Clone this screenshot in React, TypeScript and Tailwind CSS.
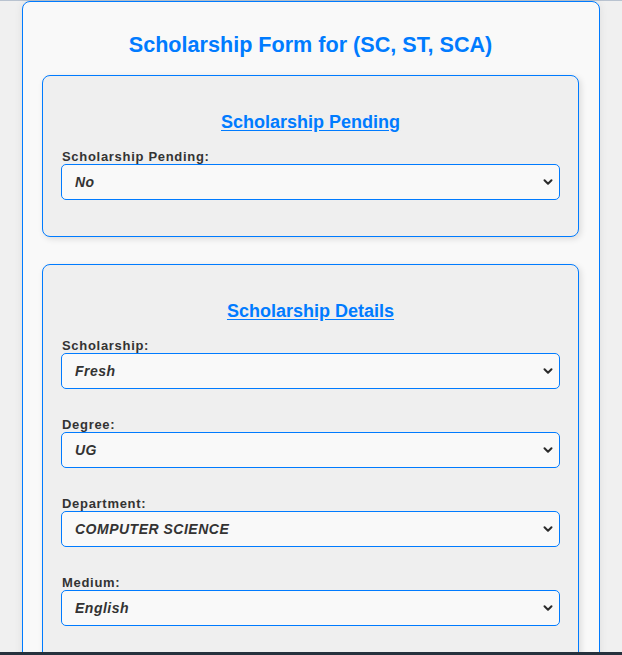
import React from "react";

type Field = { label: string; value: string; options: string[] };

const pending: Field[] = [
  { label: "Scholarship Pending:", value: "No", options: ["No", "Yes"] },
];

const details: Field[] = [
  { label: "Scholarship:", value: "Fresh", options: ["Fresh", "Renewal"] },
  { label: "Degree:", value: "UG", options: ["UG", "PG"] },
  {
    label: "Department:",
    value: "COMPUTER SCIENCE",
    options: ["COMPUTER SCIENCE", "MATHEMATICS", "PHYSICS", "COMMERCE"],
  },
  { label: "Medium:", value: "English", options: ["English", "Tamil"] },
];

function Chevron() {
  return (
    <svg
      className="pointer-events-none absolute right-[6px] top-1/2 -translate-y-1/2"
      width="12"
      height="12"
      viewBox="0 0 12 12"
    >
      <path d="M2.5 4.2 L6 7.7 L9.5 4.2" fill="none" stroke="#2b2b2b" strokeWidth="2" strokeLinecap="round" strokeLinejoin="round" />
    </svg>
  );
}

function SelectField({ field, last }: { field: Field; last?: boolean }) {
  return (
    <div className={last ? "mb-[16px]" : "mb-[28px]"}>
      <label className="block text-[13px] leading-[15px] font-bold text-[#333] tracking-[0.7px] pl-[1px]">
        {field.label}
      </label>
      <div className="relative">
        <select
          defaultValue={field.value}
          className="block w-full h-[36px] appearance-none rounded-[5px] border border-[#007bff] bg-[#f9f9f9] pl-[13px] pr-8 text-[14px] font-bold italic tracking-[0.5px] text-[#333] outline-none"
        >
          {field.options.map((o) => (
            <option key={o} value={o}>
              {o}
            </option>
          ))}
        </select>
        <Chevron />
      </div>
    </div>
  );
}

function Section({ title, fields }: { title: string; fields: Field[] }) {
  return (
    <section className="rounded-[8px] border border-[#007bff] bg-[#efefef] px-[18px] pt-[36px] pb-[20px] shadow-[2px_2px_6px_rgba(0,0,0,0.12)]">
      <h3 className="text-center text-[18px] leading-[21px] font-bold text-[#007bff] underline underline-offset-[2px] mb-[16px]">
        {title}
      </h3>
      {fields.map((f, i) => (
        <SelectField key={f.label} field={f} last={i === fields.length - 1} />
      ))}
    </section>
  );
}

export default function App() {
  return (
    <main className="min-h-screen bg-[#f0f0f0] border-t border-[#b9c3d0] font-['Liberation_Sans',Arial,sans-serif]">
      <div className="mx-auto w-[578px] rounded-[8px] border border-[#007bff] bg-[#f9f9f9] pl-[19px] pr-[20px] pt-[31px] pb-10 shadow-[0_0_8px_rgba(0,0,0,0.08)]">
        <h2 className="text-center text-[21.6px] leading-[24px] font-bold text-[#007bff] mb-[18px]">
          Scholarship Form for (SC, ST, SCA)
        </h2>
        <div className="flex flex-col gap-[27px]">
          <Section title="Scholarship Pending" fields={pending} />
          <Section title="Scholarship Details" fields={details} />
        </div>
      </div>
      <div className="fixed bottom-0 left-0 right-0 h-[3px] bg-[#26313d]" />
    </main>
  );
}
